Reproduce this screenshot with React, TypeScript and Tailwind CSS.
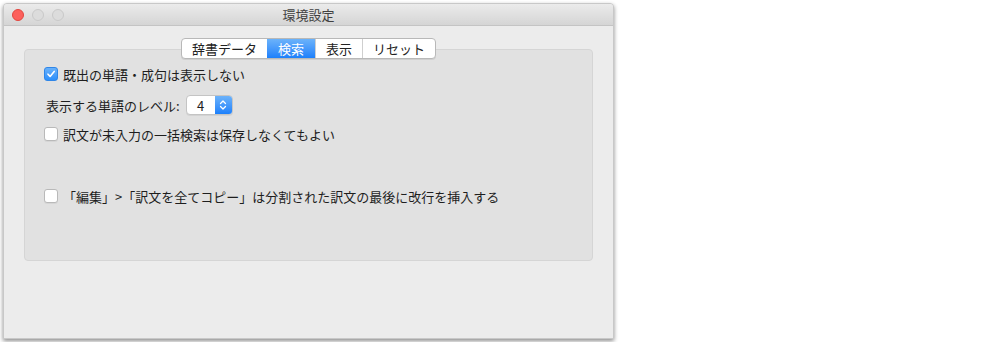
import { ChevronsUpDown } from 'lucide-react';

const jp = { fontFamily: '"Noto Sans CJK JP", "Noto Sans", sans-serif' };

function Check({ checked }: { checked?: boolean }) {
  if (checked) {
    return (
      <span className="flex h-[14px] w-[14px] shrink-0 items-center justify-center rounded-[3px] bg-gradient-to-b from-[#68b1fa] to-[#2b8ffb] border border-[#2f86e8]">
        <svg width="10" height="10" viewBox="0 0 10 10">
          <path d="M2 5.2 L4.1 7.4 L8.2 2.4" fill="none" stroke="white" strokeWidth="1.6" strokeLinecap="round" strokeLinejoin="round" />
        </svg>
      </span>
    );
  }
  return <span className="h-[14px] w-[14px] shrink-0 rounded-[3px] border border-[#b9b9b9] bg-white shadow-[0_1px_0_rgba(0,0,0,0.05)]" />;
}

export default function App() {
  const tabs = ['辞書データ', '検索', '表示', 'リセット'];

  return (
    <div className="h-[342px] w-[1000px] bg-white pl-[3px] pt-[3px]" style={jp}>
      {/* window */}
      <div className="flex h-[336px] w-[611px] flex-col overflow-hidden rounded-t-[4px] border border-[#c8c8c8] bg-[#ececec] shadow-[0_2px_4px_rgba(0,0,0,0.45)]">
        {/* title bar */}
        <div className="relative flex h-[22px] shrink-0 items-center justify-center border-b border-[#c4c4c4] bg-gradient-to-b from-[#ebebeb] to-[#d5d5d5]">
          <div className="absolute left-[8px] top-[5px] flex gap-[8px]">
            <span className="h-[12px] w-[12px] rounded-full border border-[#e2463f] bg-[#fc605c]" />
            <span className="h-[12px] w-[12px] rounded-full border border-[#c9c9c9] bg-[#dcdcdc]" />
            <span className="h-[12px] w-[12px] rounded-full border border-[#c9c9c9] bg-[#dcdcdc]" />
          </div>
          <span className="text-[13px] leading-none text-[#404040]">環境設定</span>
        </div>

        {/* group box */}
        <div className="mx-[20px] mt-[23px] h-[212px] rounded-[4px] border border-[#d5d5d5] bg-[#e1e1e1]">
          <div className="-mt-[12px] flex justify-center">
            <div className="flex h-[21px] overflow-hidden rounded-[4px] border border-[#b8b8b8] bg-white text-[13px] leading-none text-[#222] shadow-[0_1px_0_rgba(0,0,0,0.08)]">
              {tabs.map((t, i) => (
                <div
                  key={t}
                  className={
                    i === 1
                      ? 'flex items-center bg-gradient-to-b from-[#6bb2fa] to-[#1b80fb] px-[11px] text-white'
                      : `flex items-center px-[10px] ${i > 1 ? 'border-l border-[#cfcfcf]' : ''}`
                  }
                >
                  {t}
                </div>
              ))}
            </div>
          </div>

          <div className="flex flex-col pl-[19px] pt-[7px] text-[13px] leading-none text-[#1e1e1e]">
            <label className="flex h-[16px] items-center gap-[5px]">
              <Check checked />
              <span>既出の単語・成句は表示しない</span>
            </label>

            <div className="mt-[13px] flex h-[20px] items-center gap-[6px] pl-[2px]">
              <span>表示する単語のレベル:</span>
              <div className="flex h-[20px] overflow-hidden rounded-[4px] border border-[#c4c4c4] bg-white shadow-[0_1px_0_rgba(0,0,0,0.06)]">
                <span className="flex w-[28px] items-center justify-center text-[13px]">4</span>
                <span className="flex w-[17px] items-center justify-center bg-gradient-to-b from-[#6bb2fa] to-[#1b80fb]">
                  <ChevronsUpDown className="h-[12px] w-[12px] text-white" strokeWidth={2.5} />
                </span>
              </div>
            </div>

            <label className="mt-[11px] flex h-[16px] items-center gap-[5px]">
              <Check />
              <span>訳文が未入力の一括検索は保存しなくてもよい</span>
            </label>

            <label className="mt-[46px] flex h-[16px] items-center gap-[5px]">
              <Check />
              <span>「編集」&gt;「訳文を全てコピー」は分割された訳文の最後に改行を挿入する</span>
            </label>
          </div>
        </div>
      </div>
    </div>
  );
}
